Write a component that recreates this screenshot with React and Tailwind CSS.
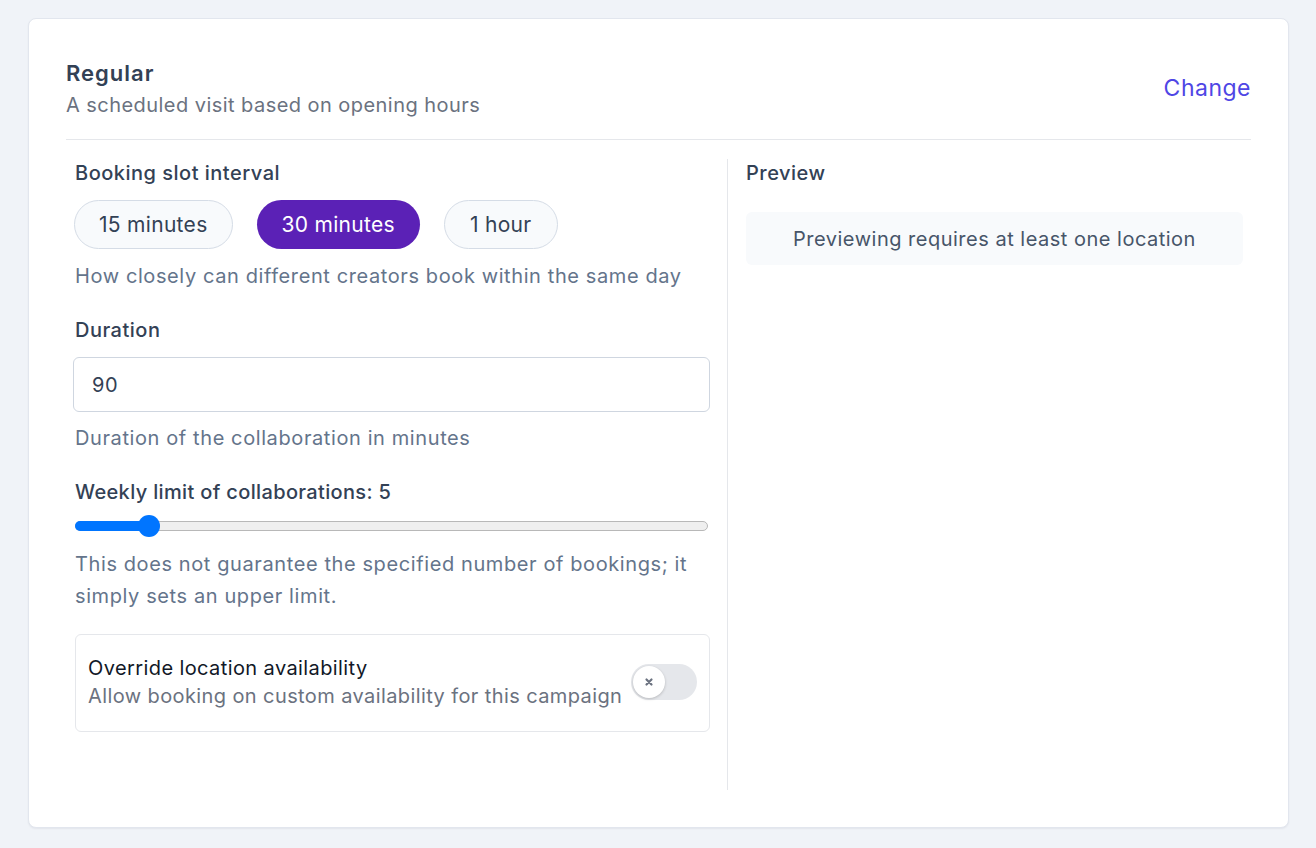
import React from "react";

export default function App() {
  const font = { fontFamily: "Inter, 'Noto Sans', sans-serif" };
  return (
    <div className="min-h-[848px] w-full bg-[#f0f3f8] pt-[18px] pl-[28px] pr-[27px] pb-[21px]" style={font}>
      <div className="rounded-[8px] border border-[#e2e6ee] bg-white shadow-[0_1px_2px_rgba(15,23,42,0.06)] px-[37px] pt-[38px] pb-[37px]">
        {/* Header */}
        <div className="flex items-center justify-between border-b border-[#e5e7eb] pb-[18px]">
          <div className="flex flex-col">
            <div className="text-[22px] leading-[32px] font-semibold tracking-[1px] text-[#334155]">Regular</div>
            <div className="text-[20px] leading-[32px] tracking-[0.45px] text-[#6b7280]">A scheduled visit based on opening hours</div>
          </div>
          <button className="text-[23px] leading-[32px] tracking-[0.5px] text-[#4f46e5] mb-[2px]">Change</button>
        </div>

        {/* Body */}
        <div className="flex mt-[19px]">
          {/* Left column */}
          <div className="w-[661px] pl-[9px] pr-[17px] flex flex-col tracking-[0.5px]">
            <div className="text-[20px] leading-[28px] font-medium text-[#334155]">Booking slot interval</div>
            <div className="flex gap-[24px] mt-[13px] -ml-[1px]">
              <button className="h-[49px] px-[24px] rounded-full border border-[#d5dce6] bg-[#f8fafc] text-[21px] tracking-[0.3px] text-[#334155]">15 minutes</button>
              <button className="h-[49px] px-[25px] rounded-full bg-[#5b21b6] text-[21px] tracking-[0.3px] text-white">30 minutes</button>
              <button className="h-[49px] px-[25px] rounded-full border border-[#d5dce6] bg-[#f8fafc] text-[21px] tracking-[0.3px] text-[#334155]">1 hour</button>
            </div>
            <div className="mt-[13px] text-[20px] leading-[28px] tracking-[0.6px] text-[#64748b]">How closely can different creators book within the same day</div>

            <div className="mt-[26px] text-[20px] leading-[28px] font-medium text-[#334155]">Duration</div>
            <div className="mt-[13px] h-[55px] w-[637px] -ml-[2px] rounded-[6px] border border-[#cfd6e0] bg-white flex items-center px-[18px] text-[20px] text-[#334155]">90</div>
            <div className="mt-[12px] text-[20px] leading-[28px] tracking-[0.6px] text-[#64748b]">Duration of the collaboration in minutes</div>

            <div className="mt-[26px] text-[20px] leading-[28px] font-medium tracking-[0.35px] text-[#334155]">Weekly limit of collaborations: 5</div>
            <div className="mt-[9px] h-[22px] flex items-center">
              <div className="relative h-[10px] w-[633px] rounded-full bg-[#efefef] border border-[#b8b8b8]">
                <div className="absolute left-[-1px] top-[-1px] h-[10px] w-[75px] rounded-full bg-[#0075ff]" />
                <div className="absolute left-[62px] top-[-7px] h-[22px] w-[22px] rounded-full bg-[#0075ff]" />
              </div>
            </div>
            <div className="mt-[11px] text-[20px] leading-[32px] tracking-[0.6px] text-[#64748b]">
              This does not guarantee the specified number of bookings; it simply sets an upper limit.
            </div>

            <div className="mt-[22px] rounded-[6px] border border-[#e5e7eb] pl-[12px] pr-[12px] pt-[19px] pb-[21px] flex items-center justify-between">
              <div className="flex flex-col">
                <div className="text-[20px] leading-[28px] tracking-[0.4px] text-[#111827]">Override location availability</div>
                <div className="text-[20px] leading-[28px] tracking-[0.4px] text-[#6b7280] whitespace-nowrap">Allow booking on custom availability for this campaign</div>
              </div>
              <div className="relative h-[36px] w-[66px] shrink-0 rounded-full bg-[#e5e7eb]">
                <div className="absolute left-[2px] top-[2px] h-[32px] w-[32px] rounded-full bg-white shadow-[0_1px_3px_rgba(0,0,0,0.2)] flex items-center justify-center">
                  <svg width="10" height="10" viewBox="0 0 10 10">
                    <path d="M2.5 2.5 L7.5 7.5 M7.5 2.5 L2.5 7.5" stroke="#6b7280" strokeWidth="2.2" strokeLinecap="round" />
                  </svg>
                </div>
              </div>
            </div>
            <div className="h-[58px]" />
          </div>

          {/* Right column */}
          <div className="flex-1 border-l border-[#e5e7eb] pl-[18px] pr-[8px] tracking-[0.5px]">
            <div className="text-[20px] leading-[28px] font-medium text-[#334155]">Preview</div>
            <div className="mt-[25px] h-[53px] rounded-[6px] bg-[#f8fafc] flex items-center justify-center text-[20px] text-[#475569]">
              Previewing requires at least one location
            </div>
          </div>
        </div>
      </div>
    </div>
  );
}
